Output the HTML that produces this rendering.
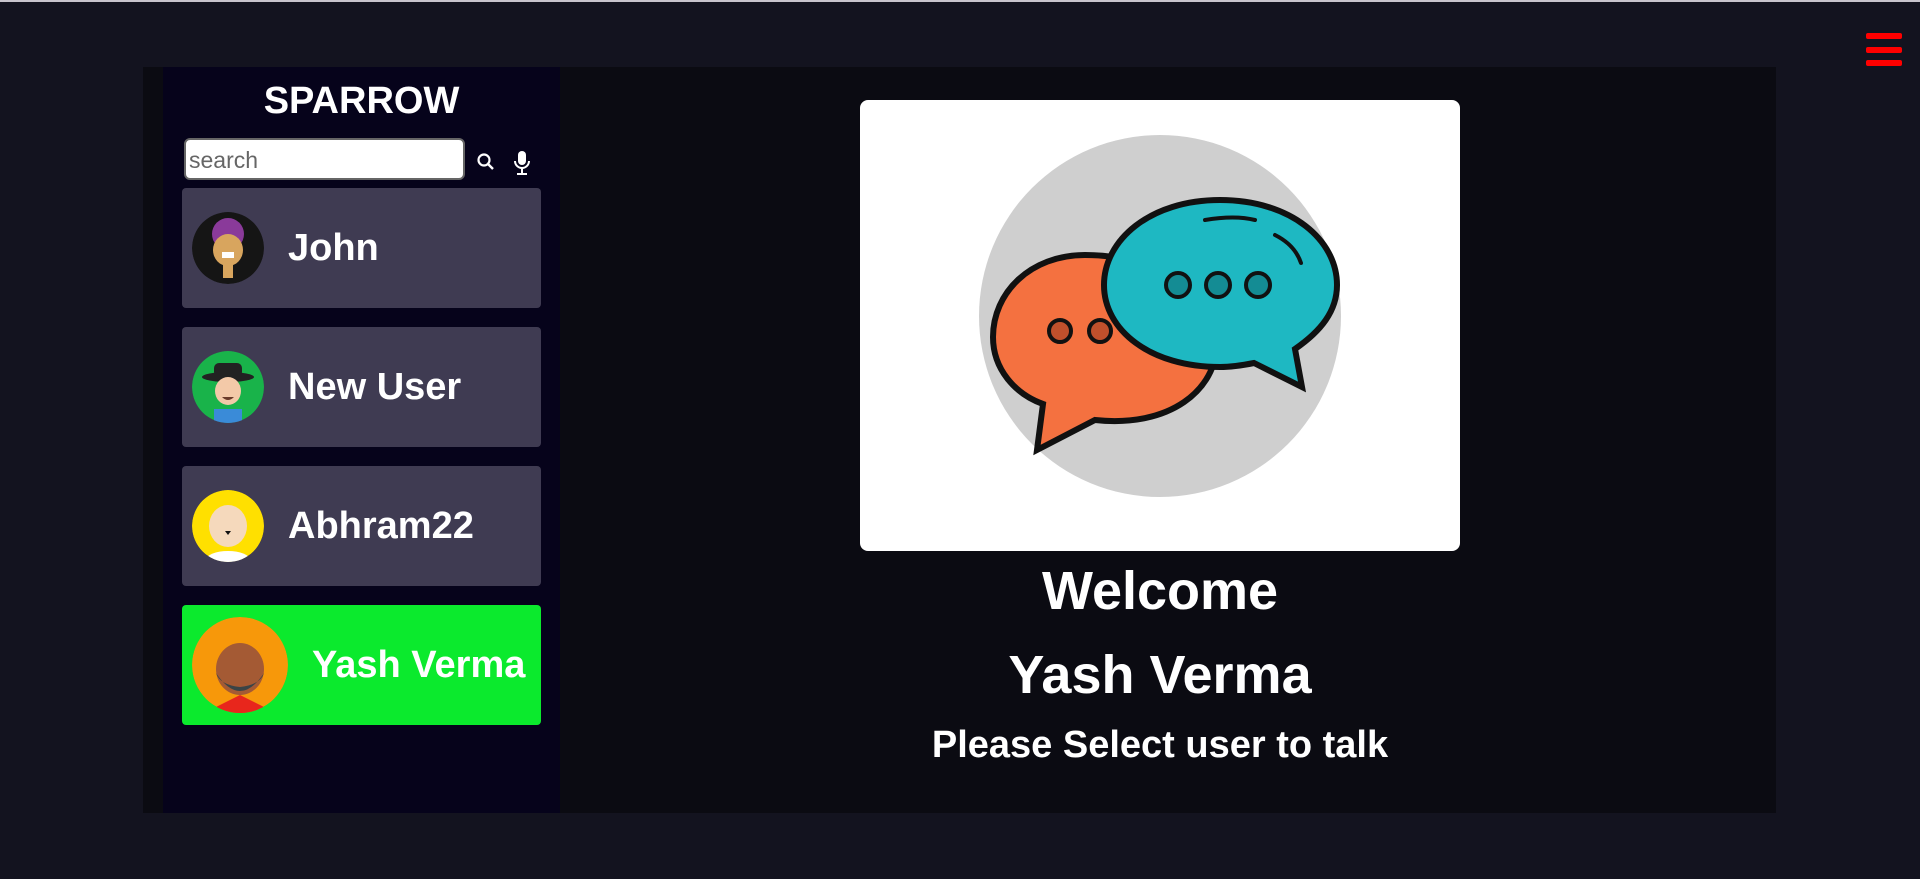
<!DOCTYPE html>
<html><head><meta charset="utf-8"><style>
*{margin:0;padding:0;box-sizing:border-box}
body{width:1920px;height:879px;background:#13131f;font-family:"Liberation Sans",sans-serif;position:relative;overflow:hidden;color:#fff}
.topline{position:absolute;left:0;top:0;width:1920px;height:2px;background:#c8c4cc}
.main{position:absolute;left:143px;top:67px;width:1633px;height:746px;background:#0b0b12}
.side{position:absolute;left:163px;top:67px;width:397px;height:746px;background:#06031b}
.title{position:absolute;left:163px;width:397px;top:80px;text-align:center;font-size:38px;font-weight:bold}
.search{position:absolute;left:184px;top:138px;width:281px;height:42px;background:#fff;border:2px solid #666;border-radius:6px;color:#666;font-size:23px;padding:7px 3px}
.card{position:absolute;left:182px;width:359px;height:120px;background:#3f3b52;border-radius:4px}
.card .av{position:absolute;left:10px;top:24px;width:72px;height:72px;border-radius:50%;overflow:hidden}
.card .nm{position:absolute;left:106px;top:0;line-height:120px;font-size:38px;font-weight:bold}
.welcome{position:absolute;left:760px;width:800px;text-align:center;font-weight:bold}
.img{position:absolute;left:860px;top:100px;width:600px;height:451px;background:#fff;border-radius:8px}
.hb{position:absolute;left:1866px;width:36px;height:6px;background:#f00;border-radius:2px}
</style></head><body>
<div class="topline"></div>
<div class="hb" style="top:33px"></div><div class="hb" style="top:47px"></div><div class="hb" style="top:60px"></div>
<div class="main"></div>
<div class="side"></div>
<div class="title">SPARROW</div>
<div class="search">search</div>
<svg style="position:absolute;left:476px;top:152px" width="20" height="20" viewBox="0 0 20 20"><circle cx="8" cy="8" r="5.5" fill="none" stroke="#fff" stroke-width="2.2"/><line x1="12" y1="12" x2="17" y2="17" stroke="#fff" stroke-width="2.4"/></svg>
<svg style="position:absolute;left:513px;top:150px" width="18" height="26" viewBox="0 0 18 26"><rect x="5" y="1" width="8" height="14" rx="4" fill="#fff"/><path d="M2 11a7 7 0 0 0 14 0" fill="none" stroke="#fff" stroke-width="2"/><line x1="9" y1="18" x2="9" y2="23" stroke="#fff" stroke-width="2"/><line x1="4" y1="24" x2="14" y2="24" stroke="#fff" stroke-width="2"/></svg>

<div class="card" style="top:188px"><svg class="av" viewBox="0 0 72 72"><circle cx="36" cy="36" r="36" fill="#151515"/><circle cx="36" cy="22" r="16" fill="#8a3a9a"/><ellipse cx="36" cy="38" rx="15" ry="16" fill="#d8a55e"/><rect x="30" y="40" width="12" height="6" fill="#fff"/><rect x="31" y="52" width="10" height="14" fill="#d8a55e"/></svg><div class="nm">John</div></div>
<div class="card" style="top:327px"><svg class="av" viewBox="0 0 72 72"><circle cx="36" cy="36" r="36" fill="#19b34a"/><ellipse cx="36" cy="26" rx="26" ry="5" fill="#222"/><rect x="22" y="12" width="28" height="14" rx="5" fill="#222"/><ellipse cx="36" cy="40" rx="13" ry="14" fill="#f3c9a8"/><path d="M30 46q6 6 12 0" fill="#6a3b2a"/><rect x="22" y="58" width="28" height="14" fill="#3a8bd8"/></svg><div class="nm">New User</div></div>
<div class="card" style="top:466px"><svg class="av" viewBox="0 0 72 72"><circle cx="36" cy="36" r="36" fill="#ffe000"/><ellipse cx="36" cy="36" rx="19" ry="21" fill="#f5d9bc"/><path d="M33 41h6l-3 4z" fill="#111"/><ellipse cx="36" cy="70" rx="22" ry="9" fill="#fff"/></svg><div class="nm">Abhram22</div></div>
<div class="card" style="top:605px;background:#0bea2d"><svg class="av" style="width:96px;height:96px;top:12px" viewBox="0 0 96 96"><circle cx="48" cy="48" r="48" fill="#f7980a"/><ellipse cx="48" cy="52" rx="24" ry="26" fill="#a45a34"/><path d="M24 56q24 36 48 0q-4 12-24 14q-20-2-24-14z" fill="#3a4446"/><path d="M24 90l24-12l24 12v6H24z" fill="#e8261c"/></svg><div class="nm" style="left:130px">Yash Verma</div></div>

<div class="img"><svg width="600" height="451" viewBox="0 0 600 451">
<circle cx="300" cy="216" r="181" fill="#cfcfcf"/>
<path d="M225 155c-55 0-92 38-92 82c0 32 22 57 50 67l-6 46l58-30c75 8 122-30 122-78c0-48-58-87-132-87z" fill="#f47140" stroke="#111" stroke-width="6"/>
<circle cx="200" cy="231" r="11" fill="#c0502c" stroke="#111" stroke-width="4"/><circle cx="240" cy="231" r="11" fill="#c0502c" stroke="#111" stroke-width="4"/>
<path d="M360 100c-70 0-116 40-116 85c0 45 46 82 116 82c12 0 24-2 34-4l48 24l-7-38c26-18 42-38 42-64c0-45-46-85-117-85z" fill="#1eb8c2" stroke="#111" stroke-width="6"/>
<circle cx="318" cy="185" r="12" fill="#148c94" stroke="#111" stroke-width="4"/><circle cx="358" cy="185" r="12" fill="#148c94" stroke="#111" stroke-width="4"/><circle cx="398" cy="185" r="12" fill="#148c94" stroke="#111" stroke-width="4"/>
<path d="M415 135q20 10 26 28M345 120q30-5 50 0" fill="none" stroke="#111" stroke-width="4" stroke-linecap="round"/>
</svg></div>
<div class="welcome" style="top:560px;font-size:54px">Welcome</div>
<div class="welcome" style="top:644px;font-size:54px">Yash Verma</div>
<div class="welcome" style="top:724px;font-size:38px">Please Select user to talk</div>
</body></html>
